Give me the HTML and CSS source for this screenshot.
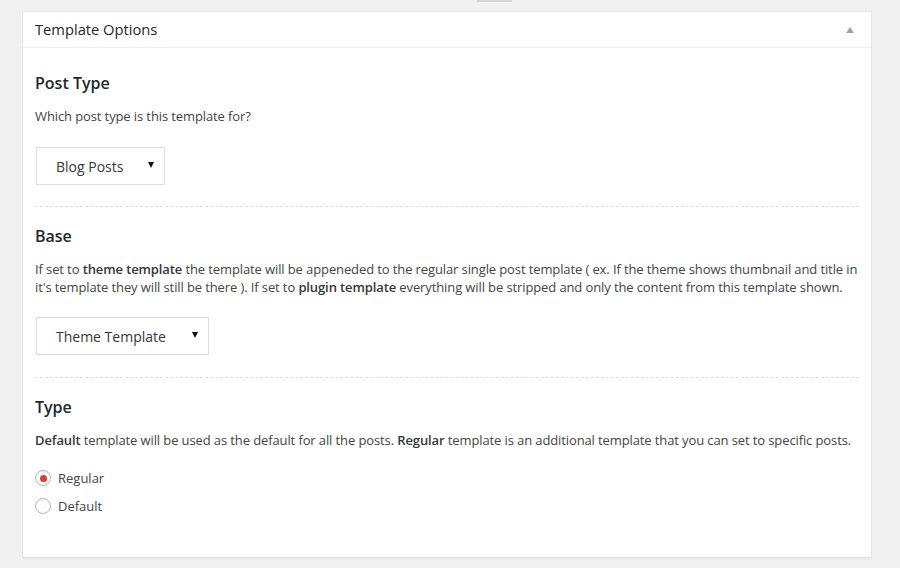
FILE: index.html
```html
<!DOCTYPE html>
<html>
<head>
<meta charset="utf-8">
<link rel="stylesheet" href="styles.css">
</head>
<body>
<div class="topnub"></div>
<div class="postbox">
  <div class="postbox-header">
    <h2 class="postbox-title">Template Options</h2>
    <span class="toggle-arrow"></span>
  </div>
  <div class="inside">
    <div class="section">
      <h3 class="section-title">Post Type</h3>
      <p class="desc">Which post type is this template for?</p>
      <div class="select select-post"><span>Blog Posts</span><span class="caret"></span></div>
    </div>
    <div class="section section-base">
      <h3 class="section-title">Base</h3>
      <p class="desc">If set to <strong>theme template</strong> the template will be appeneded to the regular single post template ( ex. If the theme shows thumbnail and title in it's template they will still be there ). If set to <strong>plugin template</strong> everything will be stripped and only the content from this template shown.</p>
      <div class="select select-base"><span>Theme Template</span><span class="caret"></span></div>
    </div>
    <div class="section section-last">
      <h3 class="section-title">Type</h3>
      <p class="desc"><strong>Default</strong> template will be used as the default for all the posts. <strong>Regular</strong> template is an additional template that you can set to specific posts.</p>
      <div class="radios">
        <label class="radio-row"><span class="radio checked"></span>Regular</label>
        <label class="radio-row"><span class="radio"></span>Default</label>
      </div>
    </div>
  </div>
</div>
</body>
</html>
```

FILE: styles.css
```css
html, body {
  margin: 0;
  padding: 0;
  background: #f1f1f1;
}
body {
  font-family: "Open Sans", "Liberation Sans", sans-serif;
  font-size: 13px;
  color: #444;
  padding: 11px 28px 0 22px;
  position: relative;
  height: 568px;
  box-sizing: border-box;
  overflow: hidden;
}
.topnub {
  position: absolute;
  top: 0;
  left: 477px;
  width: 35px;
  height: 2px;
  background: #d6d6d6;
}
.postbox {
  width: 850px;
  box-sizing: border-box;
  background: #fff;
  border: 1px solid #e5e5e5;
  box-shadow: 0 1px 1px rgba(0, 0, 0, 0.04);
}
.postbox-header {
  display: flex;
  align-items: center;
  justify-content: space-between;
  height: 35px;
  padding: 0 12px;
  border-bottom: 1px solid #eee;
}
.postbox-title {
  margin: 0;
  font-size: 14.7px;
  font-weight: 400;
  color: #23282d;
  line-height: 1.4;
}
.toggle-arrow {
  width: 0;
  height: 0;
  border-left: 4px solid transparent;
  border-right: 4px solid transparent;
  border-bottom: 6px solid #a0a5aa;
  margin-right: 5px;
  margin-top: 1px;
}
.inside {
  padding: 6px 12px 0;
}
.section {
  padding: 19px 0 21px;
  border-top: 1px dashed #ddd;
}
.section:first-child {
  border-top: none;
}
.section-base {
  padding-bottom: 22px;
}
.section-last {
  padding-bottom: 37px;
}
.section-title {
  margin: 0;
  font-size: 16px;
  font-weight: 600;
  color: #23282d;
  line-height: 20px;
}
.desc {
  margin: 14px 0 0;
  line-height: 18px;
  letter-spacing: -0.11px;
}
.desc strong {
  font-weight: 600;
  color: #32373c;
}
.select {
  display: inline-flex;
  align-items: center;
  gap: 23px;
  height: 38px;
  box-sizing: border-box;
  margin: 21px 0 0 1px;
  padding: 0 10px 0 19px;
  border: 1px solid #ddd;
  background: #fff;
  color: #32373c;
  font-size: 14px;
}
.select-post {
  margin-top: 22px;
  gap: 25px;
}
.select-base {
  gap: 26px;
}
.caret {
  width: 0;
  height: 0;
  border-left: 3.5px solid transparent;
  border-right: 3.5px solid transparent;
  border-top: 6px solid #111;
  margin-top: -2px;
}
.radios {
  margin-top: 15px;
  display: flex;
  flex-direction: column;
}
.radio-row {
  display: flex;
  align-items: center;
  gap: 7px;
  height: 28px;
  color: #444;
}
.radio {
  width: 16px;
  height: 16px;
  box-sizing: border-box;
  border: 1px solid #b4b9be;
  border-radius: 50%;
  background: #fff;
  box-shadow: inset 0 1px 2px rgba(0, 0, 0, 0.07);
  display: flex;
  align-items: center;
  justify-content: center;
}
.radio.checked::after {
  content: "";
  width: 7px;
  height: 7px;
  border-radius: 50%;
  background: #dd3d36;
}
```
